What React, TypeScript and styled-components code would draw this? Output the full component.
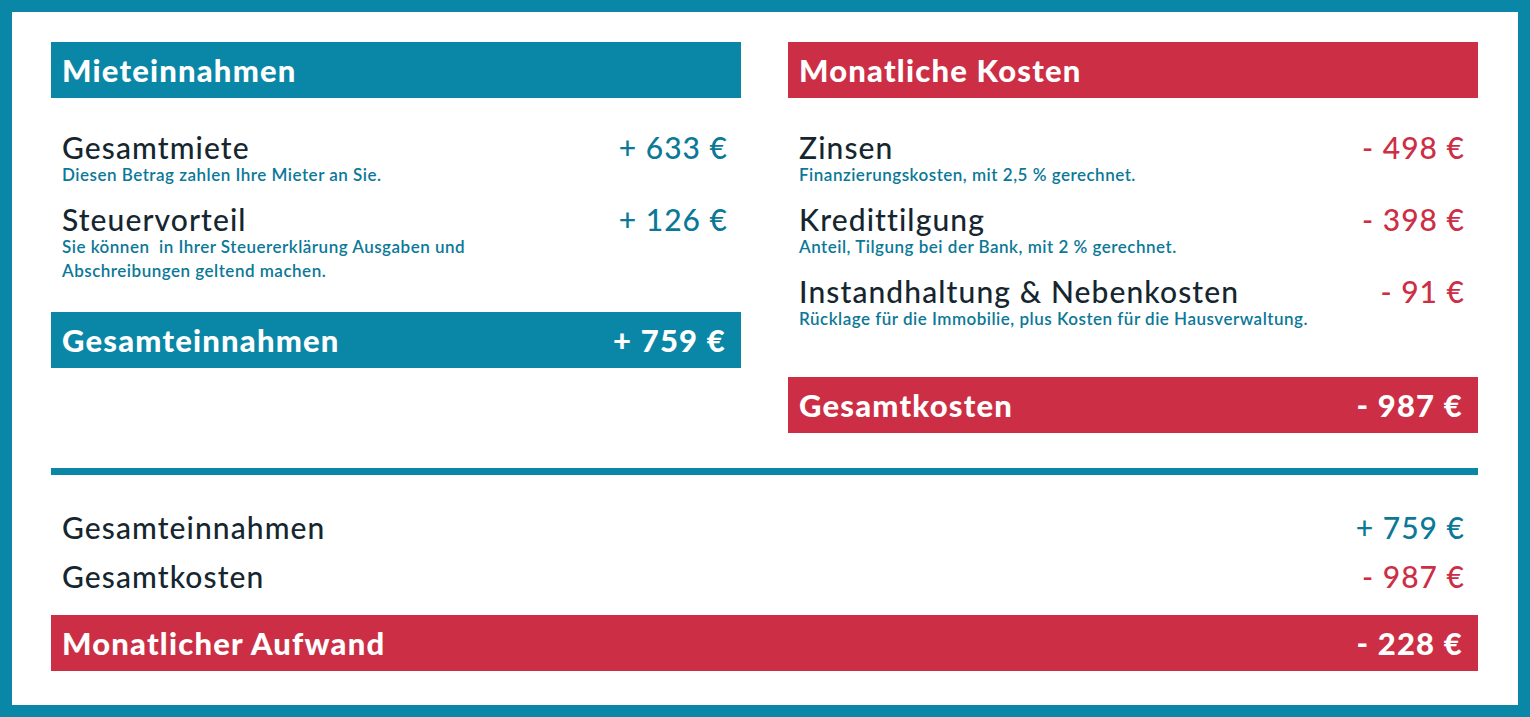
import React from 'react';
import styled, { createGlobalStyle } from 'styled-components';

const TEAL = '#0a87a7';
const RED = '#cc2f45';
const INK = '#15262f';
const NOTE = '#0b7898';

const GlobalStyle = createGlobalStyle`
  html, body {
    margin: 0;
    padding: 0;
    background: #fff;
  }
  body {
    font-family: Lato, "Open Sans", sans-serif;
  }
`;

const Frame = styled.div`
  box-sizing: border-box;
  width: 1530px;
  height: 717px;
  border: 12px solid ${TEAL};
  padding: 30px 40px 34px 39px;
  display: flex;
  flex-direction: column;
  background: #fff;
`;

const Columns = styled.div`
  display: grid;
  grid-template-columns: 690px 690px;
  column-gap: 47px;
  align-items: start;
`;

const Column = styled.section`
  display: flex;
  flex-direction: column;
`;

const Bar = styled.div<{ $tone: 'teal' | 'red' }>`
  height: 56px;
  display: flex;
  align-items: center;
  justify-content: space-between;
  padding: 0 15px 0 11px;
  background: ${p => (p.$tone === 'red' ? RED : TEAL)};
  color: #fff;
  font-size: 31px;
  font-weight: 900;
  letter-spacing: 1.2px;
`;

const ItemList = styled.div<{ $after: number }>`
  display: flex;
  flex-direction: column;
  gap: 16px;
  padding: 33px 0 ${p => p.$after}px;
`;

const Item = styled.div`
  display: flex;
  flex-direction: column;
  padding: 0 13px 0 11px;
`;

const Row = styled.div`
  display: flex;
  justify-content: space-between;
  align-items: center;
`;

const Title = styled.span`
  font-size: 30px;
  line-height: 32px;
  font-weight: 500;
  color: ${INK};
  letter-spacing: 1.1px;
`;

const Amount = styled.span<{ $tone: 'teal' | 'red' }>`
  font-size: 30px;
  line-height: 32px;
  font-weight: 500;
  letter-spacing: 1px;
  color: ${p => (p.$tone === 'red' ? RED : NOTE)};
`;

const Note = styled.p`
  margin: 0;
  font-size: 17px;
  line-height: 24px;
  font-weight: 600;
  letter-spacing: 0.5px;
  color: ${NOTE};
`;

const Divider = styled.div`
  height: 7px;
  margin-top: 35px;
  background: ${TEAL};
`;

const Summary = styled.div`
  display: flex;
  flex-direction: column;
  gap: 17px;
  padding: 36px 13px 23px 11px;
`;

type Entry = { title: string; amount: string; note: React.ReactNode };

const income: Entry[] = [
  { title: 'Gesamtmiete', amount: '+ 633 €', note: 'Diesen Betrag zahlen Ihre Mieter an Sie.' },
  {
    title: 'Steuervorteil',
    amount: '+ 126 €',
    note: (
      <>
        Sie können{'\u00a0'} in Ihrer Steuererklärung Ausgaben und
        <br />
        Abschreibungen geltend machen.
      </>
    ),
  },
];

const costs: Entry[] = [
  { title: 'Zinsen', amount: '- 498 €', note: 'Finanzierungskosten, mit 2,5 % gerechnet.' },
  { title: 'Kredittilgung', amount: '- 398 €', note: 'Anteil, Tilgung bei der Bank, mit 2 % gerechnet.' },
  {
    title: 'Instandhaltung & Nebenkosten',
    amount: '- 91 €',
    note: 'Rücklage für die Immobilie, plus Kosten für die Hausverwaltung.',
  },
];

const Block = ({ heading, total, totalLabel, entries, tone, after }: {
  heading: string;
  total: string;
  totalLabel: string;
  entries: Entry[];
  tone: 'teal' | 'red';
  after: number;
}) => (
  <Column>
    <Bar $tone={tone}>{heading}</Bar>
    <ItemList $after={after}>
      {entries.map(e => (
        <Item key={e.title}>
          <Row>
            <Title>{e.title}</Title>
            <Amount $tone={tone}>{e.amount}</Amount>
          </Row>
          <Note>{e.note}</Note>
        </Item>
      ))}
    </ItemList>
    <Bar $tone={tone}>
      <span>{totalLabel}</span>
      <span>{total}</span>
    </Bar>
  </Column>
);

export default function App() {
  return (
    <>
      <GlobalStyle />
      <Frame>
        <Columns>
          <Block heading="Mieteinnahmen" totalLabel="Gesamteinnahmen" total="+ 759 €" entries={income} tone="teal" after={29} />
          <Block heading="Monatliche Kosten" totalLabel="Gesamtkosten" total="- 987 €" entries={costs} tone="red" after={46} />
        </Columns>
        <Divider />
        <Summary>
          <Row>
            <Title>Gesamteinnahmen</Title>
            <Amount $tone="teal">+ 759 €</Amount>
          </Row>
          <Row>
            <Title>Gesamtkosten</Title>
            <Amount $tone="red">- 987 €</Amount>
          </Row>
        </Summary>
        <Bar $tone="red">
          <span>Monatlicher Aufwand</span>
          <span>- 228 €</span>
        </Bar>
      </Frame>
    </>
  );
}
